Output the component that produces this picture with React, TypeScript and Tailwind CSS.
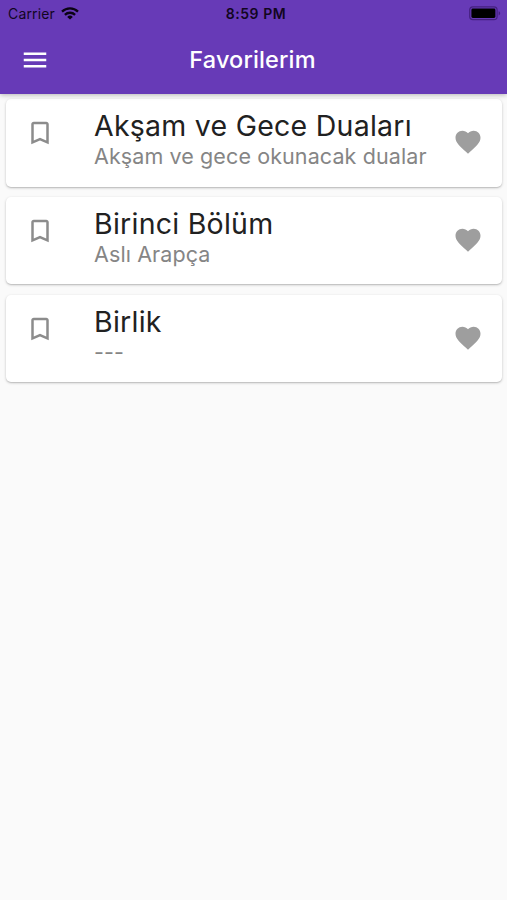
type Favorite = {
    title: string;
    subtitle: string;
};

const favorites: Favorite[] = [
    { title: 'Akşam ve Gece Duaları', subtitle: 'Akşam ve gece okunacak dualar' },
    { title: 'Birinci Bölüm', subtitle: 'Aslı Arapça' },
    { title: 'Birlik', subtitle: '---' },
];

function StatusBar() {
    return (
        <div className="grid h-[27px] grid-cols-3 items-center pl-2 pr-[6px] text-[#12061f]">
            <div className="flex items-center gap-[6px]">
                <span className="text-[14px] leading-none tracking-[0.15px]">Carrier</span>
                <svg width="18" height="13" viewBox="0 0 18 13" fill="none" stroke="#0b0314" strokeWidth="2.3" aria-hidden="true">
                    <path d="M1 4.6a11.6 11.6 0 0 1 16 0" />
                    <path d="M3.9 7.8a7.4 7.4 0 0 1 10.2 0" />
                    <path d="M9 12.6 6.2 9.9a4 4 0 0 1 5.6 0Z" fill="#0b0314" stroke="none" />
                </svg>
            </div>
            <span className="pl-[3px] text-center text-[14px] font-semibold leading-none tracking-[0.55px]">8:59 PM</span>
            <svg className="justify-self-end" width="32" height="15" viewBox="0 0 32 15" aria-hidden="true">
                <rect x="0.7" y="0.9" width="27.4" height="12.8" rx="3.2" fill="none" stroke="#452080" strokeWidth="1.2" />
                <rect x="2.4" y="2.6" width="24" height="9.4" rx="1.4" fill="#000000" />
                <path d="M29.6 5.2v4.2c1-.4 1.6-1.2 1.6-2.1s-.6-1.7-1.6-2.1Z" fill="#452080" />
            </svg>
        </div>
    );
}

function FavoriteCard({ title, subtitle }: Favorite) {
    return (
        <li className="flex h-[87.5px] rounded-[5px] bg-white pl-[19px] pr-[19.5px] shadow-[0_1px_3px_rgba(0,0,0,0.2),0_1px_1px_rgba(0,0,0,0.1)]">
            <svg className="mt-[19px] shrink-0" width="30" height="30" viewBox="0 0 24 24" fill="#8c8c8c" aria-hidden="true">
                <path d="M17 3H7c-1.1 0-1.99.9-1.99 2L5 21l7-3 7 3V5c0-1.1-.9-2-2-2zm0 15-5-2.18L7 18V5h10v13z" />
            </svg>
            <div className="ml-[39px] min-w-0 flex-1 whitespace-nowrap pt-[10px]">
                <h2 className="text-[28.5px] leading-[34px] tracking-[0.25px] text-[#212121]">{title}</h2>
                <p className="text-[21.5px] leading-[27px] tracking-[0.1px] text-[#858585]">{subtitle}</p>
            </div>
            <button type="button" aria-label="Favorilerden çıkar" className="mt-[28px] h-[30px] shrink-0">
                <svg width="30" height="30" viewBox="0 0 24 24" fill="#9e9e9e" aria-hidden="true">
                    <path d="m12 21.35-1.45-1.32C5.4 15.36 2 12.28 2 8.5 2 5.42 4.42 3 7.5 3c1.74 0 3.41.81 4.5 2.09C13.09 3.81 14.76 3 16.5 3 19.58 3 22 5.42 22 8.5c0 3.78-3.4 6.86-8.55 11.54L12 21.35z" />
                </svg>
            </button>
        </li>
    );
}

export default function App() {
    return (
        <div className="min-h-screen bg-[#fafafa] font-['Inter','Noto_Sans',sans-serif]">
            <header className="relative z-10 h-[93.5px] bg-[#673ab7] shadow-[0_1px_5px_rgba(0,0,0,0.28)]">
                <StatusBar />
                <div className="grid h-[65px] grid-cols-[60px_1fr_60px] items-center">
                    <button type="button" aria-label="Menü" className="ml-5 w-[30px]">
                        <svg width="30" height="30" viewBox="0 0 24 24" fill="#ffffff" aria-hidden="true">
                            <path d="M3 18h18v-2H3v2zm0-5h18v-2H3v2zm0-7v2h18V6H3z" />
                        </svg>
                    </button>
                    <h1 className="pr-[2px] text-center text-[23.5px] font-medium leading-none tracking-[0.15px] text-white">Favorilerim</h1>
                </div>
            </header>
            <ul className="flex flex-col gap-[10.3px] pl-[6px] pr-[5px] pt-[5.5px]">
                {favorites.map((favorite) => (
                    <FavoriteCard key={favorite.title} {...favorite} />
                ))}
            </ul>
        </div>
    );
}
